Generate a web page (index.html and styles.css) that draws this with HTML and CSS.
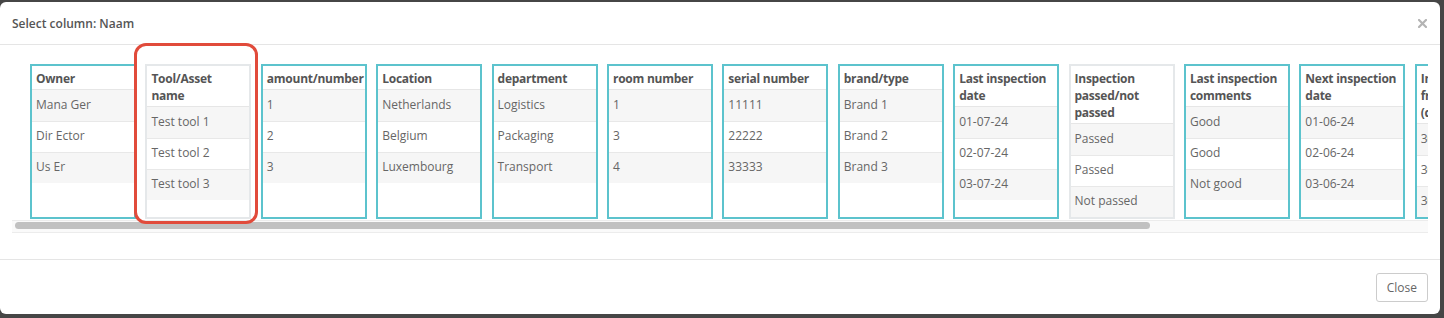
FILE: index.html
```html
<!DOCTYPE html>
<html lang="en">
<head>
    <meta charset="UTF-8">
    <meta name="viewport" content="width=device-width, initial-scale=1.0">
    <title>Select column</title>
    <link rel="stylesheet" href="styles.css">
</head>
<body>
    <div class="modal">
        <div class="modal-header">
            <h4 class="modal-title">Select column: Naam</h4>
            <button class="close" aria-label="Close">
                <svg width="9" height="9" viewBox="0 0 9 9"><path d="M1 1 L8 8 M8 1 L1 8" stroke="#b4b4b4" stroke-width="2.2" stroke-linecap="square"/></svg>
            </button>
        </div>
        <div class="modal-body">
            <div class="scroller">
                <div class="columns">
                    <div class="col">
                        <div class="col-head">Owner</div>
                        <div class="cell">Mana Ger</div>
                        <div class="cell">Dir Ector</div>
                        <div class="cell">Us Er</div>
                    </div>
                    <div class="col muted">
                        <div class="col-head">Tool/Asset<br>name</div>
                        <div class="cell">Test tool 1</div>
                        <div class="cell">Test tool 2</div>
                        <div class="cell">Test tool 3</div>
                    </div>
                    <div class="col">
                        <div class="col-head">amount/number</div>
                        <div class="cell">1</div>
                        <div class="cell">2</div>
                        <div class="cell">3</div>
                    </div>
                    <div class="col">
                        <div class="col-head">Location</div>
                        <div class="cell">Netherlands</div>
                        <div class="cell">Belgium</div>
                        <div class="cell">Luxembourg</div>
                    </div>
                    <div class="col">
                        <div class="col-head">department</div>
                        <div class="cell">Logistics</div>
                        <div class="cell">Packaging</div>
                        <div class="cell">Transport</div>
                    </div>
                    <div class="col">
                        <div class="col-head">room number</div>
                        <div class="cell">1</div>
                        <div class="cell">3</div>
                        <div class="cell">4</div>
                    </div>
                    <div class="col">
                        <div class="col-head">serial number</div>
                        <div class="cell">11111</div>
                        <div class="cell">22222</div>
                        <div class="cell">33333</div>
                    </div>
                    <div class="col">
                        <div class="col-head">brand/type</div>
                        <div class="cell">Brand 1</div>
                        <div class="cell">Brand 2</div>
                        <div class="cell">Brand 3</div>
                    </div>
                    <div class="col">
                        <div class="col-head">Last inspection<br>date</div>
                        <div class="cell">01-07-24</div>
                        <div class="cell">02-07-24</div>
                        <div class="cell">03-07-24</div>
                    </div>
                    <div class="col muted">
                        <div class="col-head">Inspection<br>passed/not<br>passed</div>
                        <div class="cell">Passed</div>
                        <div class="cell">Passed</div>
                        <div class="cell">Not passed</div>
                    </div>
                    <div class="col">
                        <div class="col-head">Last inspection<br>comments</div>
                        <div class="cell">Good</div>
                        <div class="cell">Good</div>
                        <div class="cell">Not good</div>
                    </div>
                    <div class="col">
                        <div class="col-head">Next inspection<br>date</div>
                        <div class="cell">01-06-24</div>
                        <div class="cell">02-06-24</div>
                        <div class="cell">03-06-24</div>
                    </div>
                    <div class="col">
                        <div class="col-head">Inspection<br>frequency<br>(days)</div>
                        <div class="cell">30</div>
                        <div class="cell">30</div>
                        <div class="cell">30</div>
                    </div>
                </div>
            </div>
            <div class="scrollbar"><div class="thumb"></div></div>
        </div>
        <div class="modal-footer">
            <button class="btn">Close</button>
        </div>
        <div class="highlight"></div>
    </div>
</body>
</html>
```

FILE: styles.css
```css
html, body {
    margin: 0;
    height: 318px;
}

body {
    font-family: "Open Sans", Arial, sans-serif;
    font-size: 12px;
    line-height: 17px;
    color: #666;
    background: #464646;
    padding: 2px 4px 4px 0;
    box-sizing: border-box;
    overflow: hidden;
}

.modal {
    position: relative;
    background: white;
    border-radius: 6px;
    height: 100%;
    overflow: hidden;
}

.modal-header {
    display: flex;
    justify-content: space-between;
    align-items: center;
    padding: 13px 12px 12px;
    border-bottom: 1px solid #e5e5e5;
}

.modal-title {
    margin: 0;
    font-size: 12px;
    line-height: 17px;
    font-weight: 600;
    color: #555;
}

.close {
    border: 0;
    background: none;
    padding: 0;
    margin-right: 1px;
    display: flex;
}

.modal-body {
    padding: 19px 12px 26px;
}

.scroller {
    overflow: hidden;
}

.columns {
    display: flex;
    gap: 9.4px;
    padding: 0 0 1px 18px;
}

.col {
    flex: 0 0 106px;
    min-width: 0;
    box-sizing: border-box;
    border: 2px solid #5cc3cd;
    display: flex;
    flex-direction: column;
    background: white;
    overflow: hidden;
}

.col.muted {
    border-color: #e5e8ea;
}

.col-head {
    padding: 4px 3px 2px 4px;
    font-weight: 700;
    color: #555;
    letter-spacing: -0.25px;
    white-space: nowrap;
    border-bottom: 1px solid #e6e6e6;
}

.cell {
    padding: 6px 4px 8px;
    white-space: nowrap;
}

.cell + .cell {
    padding-bottom: 8px;
    padding-top: 5px;
    border-top: 1px solid #e8e8e8;
}

.cell:nth-child(2n) {
    background: #f6f6f6;
}

.scrollbar {
    height: 10px;
    border-top: 1px solid #ececec;
    border-bottom: 1px solid #ececec;
    background: #fafafa;
    padding: 1px 0 0 3px;
}

.thumb {
    width: 1135px;
    height: 7px;
    border-radius: 4px;
    background: #c1c1c1;
}

.modal-footer {
    display: flex;
    justify-content: flex-end;
    padding: 13px 12px 12px;
    border-top: 1px solid #e5e5e5;
}

.btn {
    font-family: inherit;
    font-size: 12px;
    line-height: 17px;
    color: #666;
    background: white;
    border: 1px solid #ccc;
    border-radius: 3px;
    padding: 5px 10px;
}

.highlight {
    position: absolute;
    left: 134px;
    top: 41px;
    width: 124px;
    height: 181px;
    box-sizing: border-box;
    border: 3px solid #e14b3b;
    border-radius: 12px;
    pointer-events: none;
}
```
